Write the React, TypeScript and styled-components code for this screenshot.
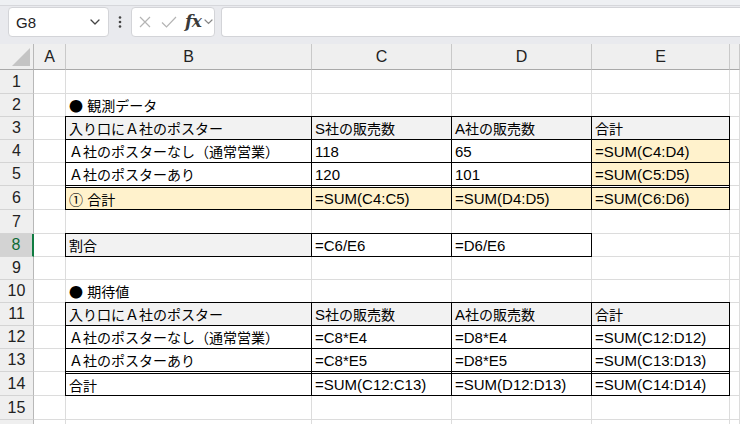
import React from "react";
import styled, { createGlobalStyle, css } from "styled-components";

const Global = createGlobalStyle`
  html, body { margin: 0; padding: 0; background: #ffffff; }
  body { width: 740px; height: 424px; overflow: hidden; font-family: "Liberation Sans", "Noto Sans CJK JP", sans-serif; }
`;

const Page = styled.div`
  width: 740px;
  height: 424px;
  overflow: hidden;
  display: flex;
  flex-direction: column;
  background: #fff;
`;

const TopStrip = styled.div`
  flex-shrink: 0;
  height: 5px;
  background: #eef0f3;
  border-bottom: 1px solid #d6d7db;
`;

const Toolbar = styled.div`
  flex-shrink: 0;
  height: 38px;
  box-sizing: border-box;
  background: #e9eaee;
  display: flex;
  align-items: flex-start;
  padding: 1px 0 0 8px;
`;

const Box = styled.div<{ $w?: number; $grow?: boolean }>`
  box-sizing: border-box;
  height: 30px;
  background: #ffffff;
  border: 1px solid #d3d4d8;
  border-radius: 4px;
  display: flex;
  align-items: center;
  flex-shrink: 0;
  ${(p) => (p.$w ? css`width: ${p.$w}px;` : "")}
  ${(p) => (p.$grow ? css`flex: 1; border-radius: 4px 0 0 4px; border-right: none;` : "")}
`;

const NameText = styled.span`
  font-size: 15px;
  color: #222;
  padding-left: 7px;
  flex: 1;
`;

const Dots = styled.div`
  width: 22px;
  height: 30px;
  display: flex;
  align-items: center;
  justify-content: center;
  flex-shrink: 0;
`;

const Fx = styled.span`
  font-family: "DejaVu Serif", "Liberation Serif", serif;
  font-style: italic;
  font-weight: 600;
  font-size: 17px;
  color: #3a3a3a;
  margin-left: 8px;
  letter-spacing: -0.5px;
  line-height: 1;
  padding-bottom: 2px;
`;

const Grid = styled.div`
  flex-shrink: 0;
  display: grid;
  grid-template-columns: 34px 32px 246px 140px 140px 138px 1fr;
  align-items: start;
`;

const ColHead = styled.div<{ $corner?: boolean }>`
  box-sizing: border-box;
  height: 26px;
  background: #efefef;
  border-bottom: 1px solid #a9a9a9;
  border-right: 1px solid ${(p) => (p.$corner ? "#b8b8b8" : "#c9c9c9")};
  display: flex;
  align-items: center;
  justify-content: center;
  font-size: 16px;
  color: #222;
  position: relative;
`;

const RowHead = styled.div<{ $sel?: boolean; $h: number }>`
  box-sizing: border-box;
  height: ${(p) => p.$h}px;
  background: ${(p) => (p.$sel ? "#d3d3d3" : "#efefef")};
  border-bottom: 1px solid #d4d4d4;
  border-right: ${(p) => (p.$sel ? "2px solid #107c41" : "1px solid #b8b8b8")};
  display: flex;
  align-items: center;
  justify-content: center;
  font-size: 16px;
  color: ${(p) => (p.$sel ? "#0e6b35" : "#222")};
`;

const Cell = styled.div<{ $h: number; $bg?: string; $bd?: boolean; $dbl?: boolean }>`
  box-sizing: border-box;
  position: relative;
  height: ${(p) => p.$h}px;
  background: ${(p) => p.$bg || "#ffffff"};
  border-right: 1px solid #dcdcdc;
  border-bottom: 1px solid #dcdcdc;
  padding: ${(p) => (p.$dbl ? "2px 3px 0 3px" : "0 3px")};
  display: flex;
  align-items: center;
  white-space: nowrap;
  font-size: 15px;
  color: #000;
  ${(p) =>
    p.$bd &&
    css`
      &::after {
        content: "";
        position: absolute;
        inset: -1px;
        border: 1px solid #000;
        pointer-events: none;
      }
    `}
  ${(p) =>
    p.$dbl &&
    css`
      &::before {
        content: "";
        position: absolute;
        top: 0;
        left: -1px;
        right: -1px;
        height: 1px;
        background: #ffffff;
        border-bottom: 1px solid #000;
        pointer-events: none;
      }
    `}
`;

const Line = styled.span`
  white-space: pre;
`;

const Jp = styled.span`
  font-family: "Noto Sans CJK JP", sans-serif;
  font-size: 14px;
`;

const Corner = styled.div`
  position: absolute;
  right: 3px;
  bottom: 3px;
  width: 0;
  height: 0;
  border-left: 18px solid transparent;
  border-bottom: 18px solid #c4c4c4;
`;

const CJK = /([\u2460-\u24ff\u25a0-\u25ff\u3000-\u30ff\u4e00-\u9fff\uff00-\uffef]+)/;

function Txt({ s }: { s: string }) {
  const parts = s.split(CJK).filter((x) => x.length > 0);
  return (
    <Line>
      {parts.map((p, i) => (CJK.test(p) ? <Jp key={i}>{p}</Jp> : <React.Fragment key={i}>{p}</React.Fragment>))}
    </Line>
  );
}

type C = { t?: string; bg?: string; bd?: boolean };
type Row = { h: number; dbl?: boolean; sel?: boolean; cells: C[] };

const G = "#f2f2f2";
const Y = "#fff2cc";

const hdr = (): C[] => [
  {},
  { t: "入り口にＡ社のポスター", bg: G, bd: true },
  { t: "S社の販売数", bg: G, bd: true },
  { t: "A社の販売数", bg: G, bd: true },
  { t: "合計", bg: G, bd: true },
  {},
];

const rows: Row[] = [
  { h: 24, cells: [] },
  { h: 23, cells: [{}, { t: "● 観測データ" }] },
  { h: 23, cells: hdr() },
  {
    h: 23,
    cells: [
      {},
      { t: "Ａ社のポスターなし（通常営業）", bd: true },
      { t: "118", bd: true },
      { t: "65", bd: true },
      { t: "=SUM(C4:D4)", bg: Y, bd: true },
    ],
  },
  {
    h: 23,
    cells: [
      {},
      { t: "Ａ社のポスターあり", bd: true },
      { t: "120", bd: true },
      { t: "101", bd: true },
      { t: "=SUM(C5:D5)", bg: Y, bd: true },
    ],
  },
  {
    h: 24,
    dbl: true,
    cells: [
      {},
      { t: "① 合計", bg: Y, bd: true },
      { t: "=SUM(C4:C5)", bg: Y, bd: true },
      { t: "=SUM(D4:D5)", bg: Y, bd: true },
      { t: "=SUM(C6:D6)", bg: Y, bd: true },
    ],
  },
  { h: 24, cells: [] },
  {
    h: 23,
    sel: true,
    cells: [{}, { t: "割合", bg: G, bd: true }, { t: "=C6/E6", bd: true }, { t: "=D6/E6", bd: true }],
  },
  { h: 23, cells: [] },
  { h: 23, cells: [{}, { t: "● 期待値" }] },
  { h: 23, cells: hdr() },
  {
    h: 23,
    cells: [
      {},
      { t: "Ａ社のポスターなし（通常営業）", bd: true },
      { t: "=C8*E4", bd: true },
      { t: "=D8*E4", bd: true },
      { t: "=SUM(C12:D12)", bd: true },
    ],
  },
  {
    h: 23,
    cells: [
      {},
      { t: "Ａ社のポスターあり", bd: true },
      { t: "=C8*E5", bd: true },
      { t: "=D8*E5", bd: true },
      { t: "=SUM(C13:D13)", bd: true },
    ],
  },
  {
    h: 24,
    dbl: true,
    cells: [
      {},
      { t: "合計", bd: true },
      { t: "=SUM(C12:C13)", bd: true },
      { t: "=SUM(D12:D13)", bd: true },
      { t: "=SUM(C14:D14)", bd: true },
    ],
  },
  { h: 24, cells: [] },
  { h: 23, cells: [] },
];

const Chevron = () => (
  <svg width="10" height="6" viewBox="0 0 10 6" fill="none">
    <path d="M1 1l4 4 4-4" stroke="#444" strokeWidth="1.3" strokeLinecap="round" strokeLinejoin="round" />
  </svg>
);

export default function App() {
  return (
    <Page>
      <Global />
      <TopStrip />
      <Toolbar>
        <Box $w={101}>
          <NameText>G8</NameText>
          <span style={{ marginRight: 8, display: "flex" }}>
            <Chevron />
          </span>
        </Box>
        <Dots>
          <svg width="4" height="12" viewBox="0 0 4 12">
            <circle cx="2" cy="1.5" r="1.3" fill="#444" />
            <circle cx="2" cy="6" r="1.3" fill="#444" />
            <circle cx="2" cy="10.5" r="1.3" fill="#444" />
          </svg>
        </Dots>
        <Box $w={84}>
          <svg width="12" height="12" viewBox="0 0 12 12" style={{ marginLeft: 7 }}>
            <path d="M1 1l10 10M11 1L1 11" stroke="#b4b4b4" strokeWidth="1.2" />
          </svg>
          <svg width="16" height="12" viewBox="0 0 16 12" style={{ marginLeft: 10 }}>
            <path d="M1 6.5l4.5 4.5L15 1" stroke="#b4b4b4" strokeWidth="1.2" fill="none" />
          </svg>
          <Fx>fx</Fx>
          <span style={{ marginLeft: 3, display: "flex" }}>
            <svg width="9" height="6" viewBox="0 0 9 6" fill="none">
              <path d="M1 1l3.5 3.5L8 1" stroke="#888" strokeWidth="1.2" strokeLinecap="round" />
            </svg>
          </span>
        </Box>
        <div style={{ width: 6, flexShrink: 0 }} />
        <Box $grow />
      </Toolbar>
      <Grid>
        <ColHead $corner>
          <Corner />
        </ColHead>
        {["A", "B", "C", "D", "E", ""].map((c, i) => (
          <ColHead key={i}>{c}</ColHead>
        ))}
        {rows.map((r, ri) => (
          <React.Fragment key={ri}>
            <RowHead $h={r.h} $sel={r.sel}>
              {ri + 1}
            </RowHead>
            {[0, 1, 2, 3, 4, 5].map((ci) => {
              const c = r.cells[ci] || {};
              const tableCell = r.dbl && ci >= 1 && ci <= 4;
              return (
                <Cell key={ci} $h={r.h} $bg={c.bg} $bd={c.bd} $dbl={tableCell}>
                  {c.t ? <Txt s={c.t} /> : null}
                </Cell>
              );
            })}
          </React.Fragment>
        ))}
      </Grid>
    </Page>
  );
}
